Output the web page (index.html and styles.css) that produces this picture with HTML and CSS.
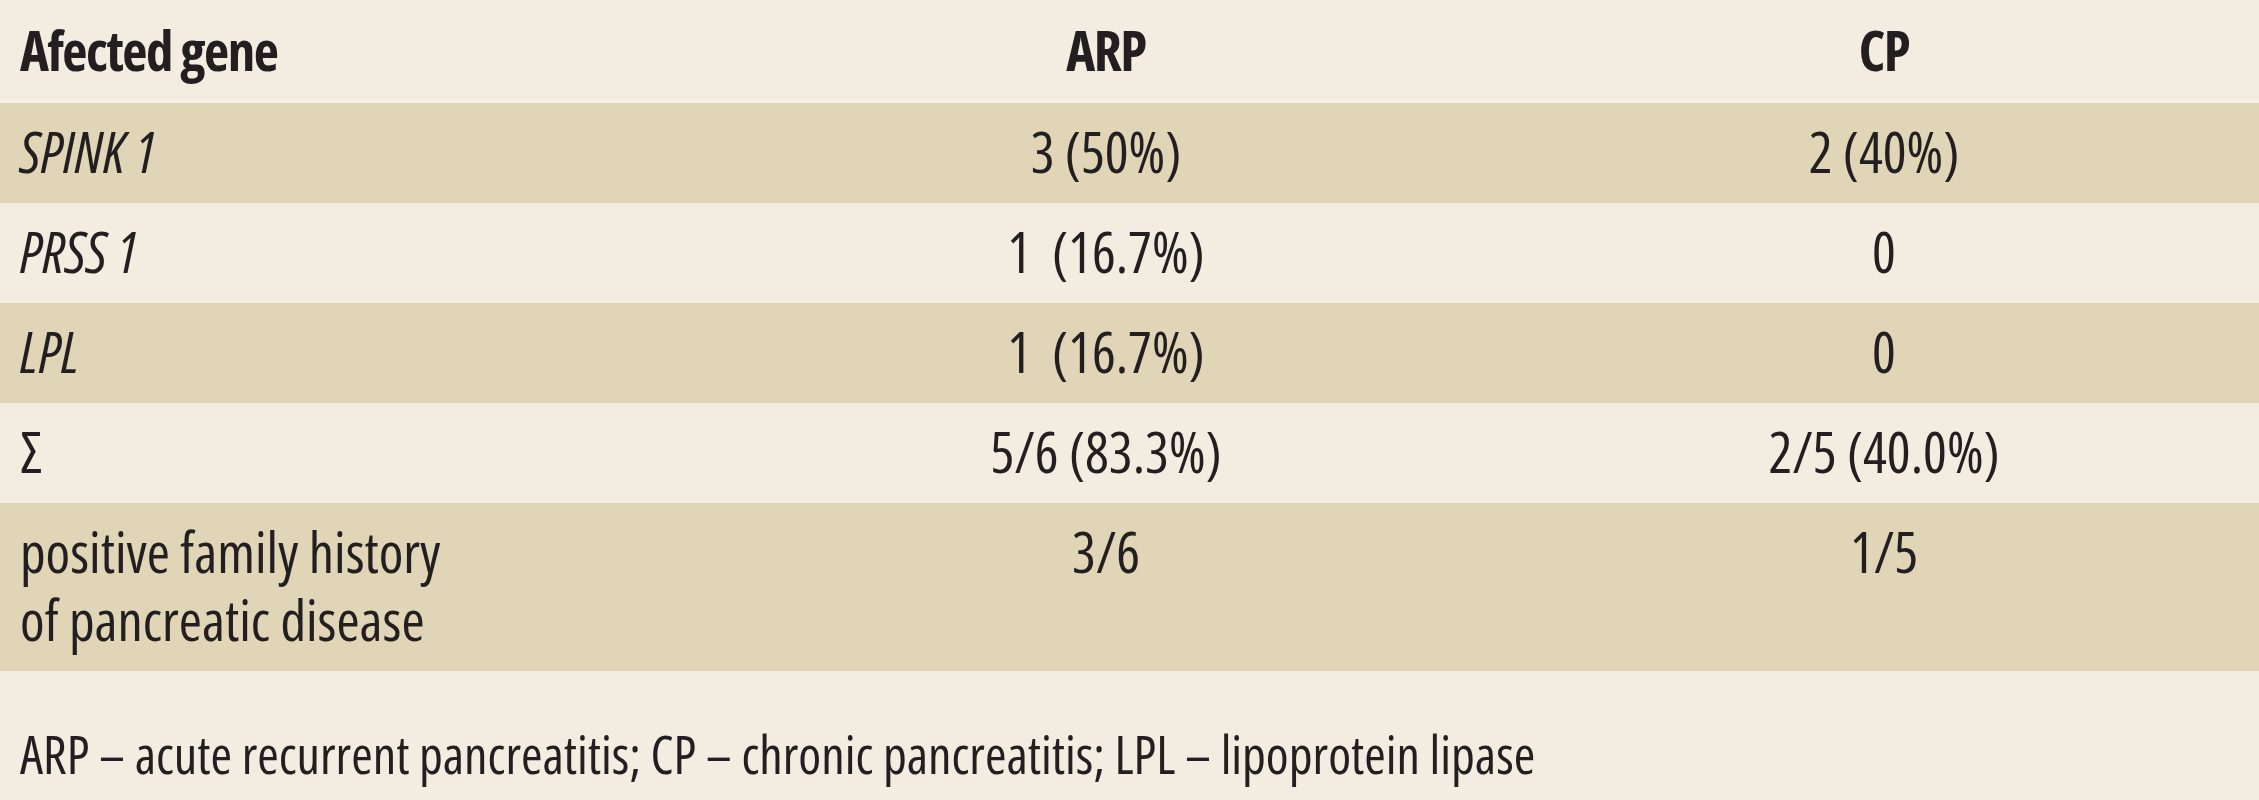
FILE: index.html
```html
<!DOCTYPE html>
<html lang="en">
<head>
<meta charset="utf-8">
<title>Affected genes</title>
<link rel="stylesheet" href="styles.css">
</head>
<body>
<div class="page">
  <div class="table">
    <div class="row head">
      <div class="cell first">Afected gene</div>
      <div class="cell mid">ARP</div>
      <div class="cell mid">CP</div>
    </div>
    <div class="row dark">
      <div class="cell first gene">SPINK 1</div>
      <div class="cell mid">3 (50%)</div>
      <div class="cell mid">2 (40%)</div>
    </div>
    <div class="row light">
      <div class="cell first gene">PRSS 1</div>
      <div class="cell mid">1&nbsp; (16.7%)</div>
      <div class="cell mid">0</div>
    </div>
    <div class="row dark">
      <div class="cell first gene">LPL</div>
      <div class="cell mid">1&nbsp; (16.7%)</div>
      <div class="cell mid">0</div>
    </div>
    <div class="row light">
      <div class="cell first">Σ</div>
      <div class="cell mid">5/6 (83.3%)</div>
      <div class="cell mid">2/5 (40.0%)</div>
    </div>
    <div class="row dark">
      <div class="cell first">positive family history<br>of pancreatic disease</div>
      <div class="cell mid">3/6</div>
      <div class="cell mid">1/5</div>
    </div>
  </div>
  <p class="note">ARP – acute recurrent pancreatitis; CP – chronic pancreatitis; LPL – lipoprotein lipase</p>
</div>
</body>
</html>
```
FILE: styles.css
```css
html, body {
  margin: 0;
  padding: 0;
}
body {
  background: #f2ede0;
  color: #231f20;
  font-family: "Open Sans", "Liberation Sans Narrow", "Liberation Sans", sans-serif;
  font-stretch: 75%;
}
.page {
  width: 2259px;
  height: 800px;
  overflow: hidden;
  background: #f2ede0;
}
.table {
  display: flex;
  flex-direction: column;
}
.row {
  display: grid;
  grid-template-columns: 703px 806px 750px;
}
.head {
  font-weight: 700;
  border-bottom: 3px solid #f6f2e8;
}
.dark {
  background: #e0d5b6;
}
.light {
  background: #f2ede0;
}
.cell {
  font-size: 56px;
  line-height: 68px;
  padding-top: 14px;
  padding-bottom: 18px;
}
.head .cell {
  font-size: 55px;
  letter-spacing: -1.5px;
  padding-top: 16px;
  padding-bottom: 16px;
}
.first {
  padding-left: 20px;
}
.mid {
  text-align: center;
}
.gene {
  font-style: italic;
}
.note {
  margin: 0;
  padding: 49px 0 0 20px;
  font-size: 52px;
  line-height: 68px;
}
```
